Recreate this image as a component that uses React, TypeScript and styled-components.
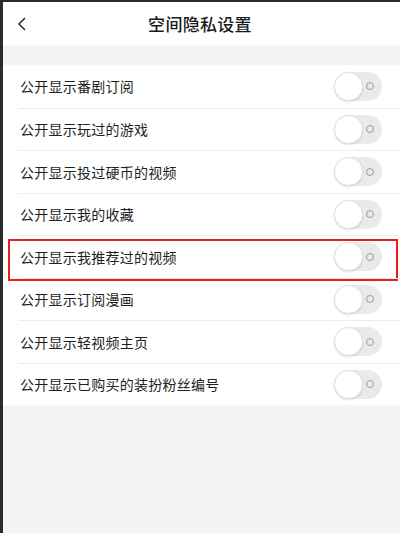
import { FC } from 'react'
import styled, { createGlobalStyle } from 'styled-components'

const Global = createGlobalStyle`
    html, body {
        margin: 0;
        padding: 0;
        background: #f4f4f4;
    }
    * {
        box-sizing: border-box;
    }
`
const Frame = styled.div`
    display: flex;
    flex-direction: column;
    width: 400px;
    height: 533px;
    background-color: #f4f4f4;
    border-left: 3px solid #2b2b2b;
    border-top: 2px solid #2b2b2b;
    font-family: 'Noto Sans CJK SC', 'Noto Sans', sans-serif;
    overflow: hidden;
`
const Header = styled.div`
    display: grid;
    grid-template-columns: 40px 1fr 40px;
    align-items: center;
    height: 43px;
    background-color: #fff;
    padding-left: 14px;
`
const Back = styled.div`
    display: flex;
    align-items: center;
    color: #333;
`
const Title = styled.h1`
    margin: 0 0 0 -17px;
    text-align: center;
    font-size: 17px;
    font-weight: 500;
    color: #1a1a1a;
    letter-spacing: 0.3px;
`
const Gap = styled.div`
    height: 20px;
`
const List = styled.div`
    display: flex;
    flex-direction: column;
    background-color: #fff;
`
const Row = styled.div<{ $first?: boolean }>`
    position: relative;
    display: flex;
    align-items: center;
    justify-content: space-between;
    height: 42.5px;
    margin-left: 15px;
    padding-right: 18px;
    border-top: ${(p) => (p.$first ? 'none' : '1px solid #ececec')};
`
const Label = styled.span`
    font-size: 14px;
    color: #1e1e1e;
    letter-spacing: 0.25px;
    padding-left: 2px;
`
const Track = styled.div`
    position: relative;
    display: flex;
    align-items: center;
    justify-content: flex-end;
    width: 48px;
    height: 29px;
    border-radius: 15px;
    background-color: #eaeaea;
    padding-right: 8px;
`
const Knob = styled.div`
    position: absolute;
    left: 0;
    top: 0;
    width: 29px;
    height: 29px;
    border-radius: 50%;
    background-color: #fff;
    border: 1px solid #e2e2e2;
    box-shadow: 0 1px 2px rgba(0, 0, 0, 0.12);
`
const Ring = styled.div`
    width: 8px;
    height: 8px;
    border-radius: 50%;
    border: 1px solid #9a9a9a;
`
const Highlight = styled.div`
    position: absolute;
    left: -10px;
    right: 2px;
    top: 3px;
    height: 42px;
    border: 2px solid #ec1c1c;
    pointer-events: none;
`

const items = [
    '公开显示番剧订阅',
    '公开显示玩过的游戏',
    '公开显示投过硬币的视频',
    '公开显示我的收藏',
    '公开显示我推荐过的视频',
    '公开显示订阅漫画',
    '公开显示轻视频主页',
    '公开显示已购买的装扮粉丝编号',
]

const Toggle: FC = () => (
    <Track>
        <Knob />
        <Ring />
    </Track>
)

const App: FC = () => {
    return (
        <Frame>
            <Global />
            <Header>
                <Back>
                    <svg width="10" height="16" viewBox="0 0 10 16">
                        <path d="M8 2 L2 8 L8 14" fill="none" stroke="#333" strokeWidth="1.6" />
                    </svg>
                </Back>
                <Title>空间隐私设置</Title>
                <span />
            </Header>
            <Gap />
            <List>
                {items.map((text, i) => (
                    <Row key={text} $first={i === 0}>
                        <Label>{text}</Label>
                        <Toggle />
                        {i === 4 && <Highlight />}
                    </Row>
                ))}
            </List>
        </Frame>
    )
}

export default App
